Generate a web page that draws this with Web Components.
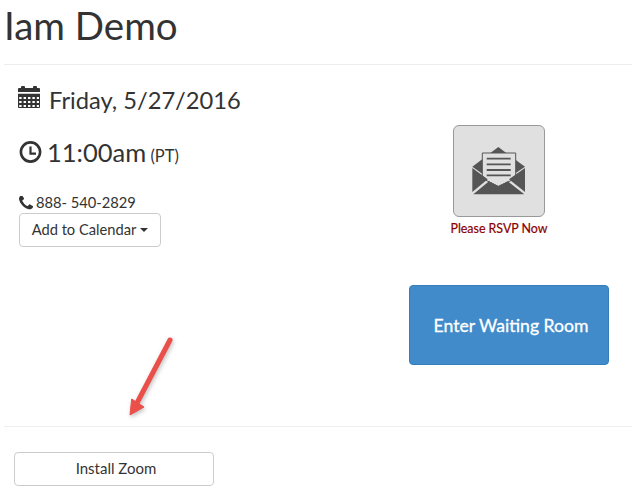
<!DOCTYPE html>
<html lang="en">
<head>
<meta charset="utf-8">
<title>Iam Demo</title>
<style>
  html, body { margin: 0; padding: 0; background: #fff; }
  body { font-family: Lato, sans-serif; color: #333; }
</style>
</head>
<body>
<demo-page>
  <demo-title slot="title">Iam Demo</demo-title>
  <demo-when slot="left" size="23.700" pad="18" gap="9" lift="7" line="34" icon="calendar">Friday, 5/27/2016</demo-when>
  <demo-when slot="left" size="25.500" pad="18" gap="4" lift="5" line="34" icon="clock">11:00am<small> (PT)</small></demo-when>
  <demo-when slot="left" size="14.700" pad="19" gap="3" lift="0" line="21" icon="phone">888- 540-2829</demo-when>
  <demo-button slot="left" width="142" size="14.700" caret>Add to Calendar</demo-button>
  <demo-rsvp slot="right">Please RSVP Now</demo-rsvp>
  <demo-button slot="right" width="200" height="80" size="17.600" kind="primary">Enter Waiting Room</demo-button>
  <demo-button slot="footer" width="200" size="15" nudge>Install Zoom</demo-button>
</demo-page>

<script>
const ICONS = {
  calendar: `<svg viewBox="0 0 22 22" width="22" height="22" fill="#333" style="margin-left: -1px">
      <path d="M0 6v-3q0-1 1-1h2v-1q0-1 1-1h2q1 0 1 1v1h8v-1q0-1 1-1h2q1 0 1 1v1h2q1 0 1 1v3z"/>
      <path fill-rule="evenodd" d="M0 7.700h22v13.300q0 1-1 1h-20q-1 0-1-1zM1.200 11v2h2.400v-2zM5.600 11v2h2.400v-2zM10 11v2h2.400v-2zM14.400 11v2h2.400v-2zM18.800 11v2h2.200v-2zM1.200 15v2h2.400v-2zM5.600 15v2h2.400v-2zM10 15v2h2.400v-2zM14.400 15v2h2.400v-2zM18.800 15v2h2.200v-2zM1.200 19v2h2.400v-2zM5.600 19v2h2.400v-2zM10 19v2h2.400v-2zM14.400 19v2h2.400v-2zM18.800 19v2h2.200v-2z"/>
    </svg>`,
  clock: `<svg viewBox="0 0 24 24" width="24" height="24" fill="none" stroke="#333">
      <circle cx="11.500" cy="12" r="9.600" stroke-width="2.600"/>
      <path d="M11.500 6.500v7.200h5.500" stroke-width="2.200"/>
    </svg>`,
  phone: `<svg viewBox="192 192 1408 1408" width="14" height="14" fill="#333">
      <path d="M1600 1240q0 27-10 70.500t-21 68.500q-21 50-122 106-94 51-186 51-27 0-53-3.500t-57.500-12.500-47-14.500-55.500-20.500-49-18q-98-35-175-83-127-79-264-216t-216-264q-48-77-83-175-3-9-18-49t-20.500-55.500-14.500-47-12.500-57.500-3.500-53q0-92 51-186 56-101 106-122 25-11 68.500-21t70.500-10q14 0 21 3 18 6 53 76 11 19 30 54t35 63.500 31 53.500q3 4 17.500 25t21.500 35.500 7 28.500q0 20-28.500 50t-62 55-62 53-28.500 46q0 9 5 22.500t8.500 20.500 14 24 11.500 19q76 137 174 235t235 174q2 1 19 11.500t24 14 20.500 8.500 22.500 5q18 0 46-28.500t53-62 55-62 50-28.500q14 0 28.500 7t35.500 21.500 25 17.500q25 15 53.500 31t63.500 35 54 30q70 35 76 53 3 7 3 21z"/>
    </svg>`
};

class DemoPage extends HTMLElement {
  constructor() {
    super();

    this.attachShadow( {mode: 'open'} ).innerHTML = /* template */ `
      <style>
        :host {
          box-sizing: border-box;
          display: block;
          height: 495px;
          overflow: hidden;
          padding: 0 1px 0 4px;
          position: relative;
          width: 633px;
        }

        hr {
          border: 0;
          border-top: 1px solid #eee;
          margin: 0;
        }

        .title {
          height: 64px;
        }

        .columns {
          display: flex;
          height: 361px;
          justify-content: space-between;
        }

        .left {
          display: flex;
          flex-direction: column;
          padding: 0 0 0 15px;
        }

        .right {
          display: flex;
          flex-direction: column;
          margin-right: 23px;
          padding-top: 60px;
          width: 200px;
        }

        .footer {
          padding: 25px 0 0 10px;
        }

        svg {
          filter: drop-shadow( 1px 2px 2px rgba( 0, 0, 0, 0.25 ) );
          left: 120px;
          position: absolute;
          top: 330px;
        }
      </style>
      <div class="title"><slot name="title"></slot></div>
      <hr>
      <div class="columns">
        <div class="left"><slot name="left"></slot></div>
        <div class="right"><slot name="right"></slot></div>
      </div>
      <hr>
      <div class="footer"><slot name="footer"></slot></div>
      <svg width="60" height="90" viewBox="120 330 60 90">
        <path d="M170 340L137 403" stroke="#ea4f49" stroke-width="5" stroke-linecap="round" fill="none"/>
        <path d="M130 415L131.700 399L144 407z" fill="#ea4f49" stroke="#ea4f49" stroke-linejoin="round"/>
      </svg>
    `;
  }
}

class DemoTitle extends HTMLElement {
  constructor() {
    super();

    this.attachShadow( {mode: 'open'} ).innerHTML = /* template */ `
      <style>
        :host {
          color: #333;
          display: block;
          font-family: Lato, sans-serif;
          font-size: 38.500px;
          font-weight: 400;
          line-height: 50px;
        }
      </style>
      <slot></slot>
    `;
  }
}

class DemoWhen extends HTMLElement {
  constructor() {
    super();

    const icon = this.getAttribute( 'icon' );

    this.attachShadow( {mode: 'open'} ).innerHTML = /* template */ `
      <style>
        :host {
          align-items: center;
          color: #333;
          display: flex;
          font-family: Lato, sans-serif;
          font-size: ${this.getAttribute( 'size' )}px;
          gap: ${this.getAttribute( 'gap' )}px;
          line-height: ${this.getAttribute( 'line' )}px;
          padding-top: ${this.getAttribute( 'pad' )}px;
        }

        span {
          white-space: pre;
        }

        ::slotted( small ) {
          font-size: 16.500px;
        }

        svg {
          flex: none;
          margin-bottom: ${this.getAttribute( 'lift' )}px;
        }
      </style>
      ${ICONS[icon]}
      <span><slot></slot></span>
    `;
  }
}

class DemoButton extends HTMLElement {
  constructor() {
    super();

    const primary = this.getAttribute( 'kind' ) === 'primary';
    const caret = this.hasAttribute( 'caret' );
    const nudge = this.hasAttribute( 'nudge' );

    this.attachShadow( {mode: 'open'} ).innerHTML = /* template */ `
      <style>
        :host {
          display: block;
          flex: none;
          width: ${this.getAttribute( 'width' )}px;
        }

        button {
          align-items: center;
          background: ${primary ? '#428bca' : '#fff'};
          border: 1px solid ${primary ? '#357ebd' : '#ccc'};
          border-radius: 4px;
          box-sizing: border-box;
          color: ${primary ? '#fff' : '#333'};
          display: flex;
          font-family: Lato, sans-serif;
          font-size: ${this.getAttribute( 'size' )}px;
          font-weight: 400;
          gap: 4px;
          height: ${this.getAttribute( 'height' ) || 34}px;
          justify-content: center;
          padding: 0 0 ${primary ? 0 : 2}px ${primary || nudge ? 4 : 0}px;
          width: 100%;
          -webkit-text-stroke: ${primary ? '0.3px #fff' : '0'};
        }

        i {
          border-left: 4px solid transparent;
          border-right: 4px solid transparent;
          border-top: 4px solid #333;
          display: block;
          margin-top: 2px;
        }
      </style>
      <button type="button"><slot></slot>${caret ? '<i></i>' : ''}</button>
    `;
  }
}

class DemoRsvp extends HTMLElement {
  constructor() {
    super();

    this.attachShadow( {mode: 'open'} ).innerHTML = /* template */ `
      <style>
        :host {
          align-items: center;
          color: #8b0000;
          display: flex;
          flex-direction: column;
          font-family: Lato, sans-serif;
          font-size: 12.400px;
          font-weight: 400;
          height: 160px;
          width: 180px;
          -webkit-text-stroke: 0.2px #8b0000;
        }

        .tile {
          background: #e0e0e0;
          border: 1px solid #999;
          border-radius: 6px;
          box-sizing: border-box;
          height: 92px;
          width: 92px;
        }

        svg {
          display: block;
          margin: -1px;
        }

        p {
          line-height: 16px;
          margin: 4px 0 0 0;
        }
      </style>
      <div class="tile">
        <svg width="92" height="92" viewBox="0 0 92 92">
          <path d="M45.300 22L72 41.700L45.300 60L19.300 41.700z" fill="#555"/>
          <path d="M29.300 28H62.700V53.500L45.300 61.300L29.300 53.500z" fill="#e0e0e0" stroke="#555"/>
          <path d="M33.700 33.700H57.700M33.700 39.300H57.700M33.700 45H57.700M33.700 50.300H57.700" stroke="#555" stroke-width="1.800"/>
          <path d="M19.300 43L34.700 54.300L19.300 67z" fill="#555"/>
          <path d="M72 43L56 54.300L72 67z" fill="#555"/>
          <path d="M20.300 69.300L36 56.300L45.300 61.300L54.700 56.300L71.300 69.300z" fill="#555"/>
        </svg>
      </div>
      <p><slot></slot></p>
    `;
  }
}

window.customElements.define( 'demo-page', DemoPage );
window.customElements.define( 'demo-title', DemoTitle );
window.customElements.define( 'demo-when', DemoWhen );
window.customElements.define( 'demo-button', DemoButton );
window.customElements.define( 'demo-rsvp', DemoRsvp );
</script>
</body>
</html>
